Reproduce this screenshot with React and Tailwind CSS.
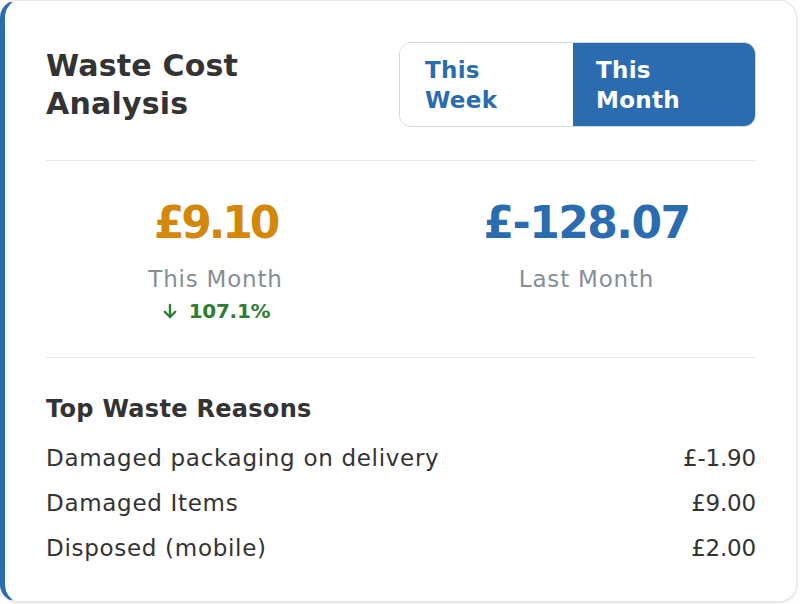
import React from "react";

const font = { fontFamily: '"DejaVu Sans", sans-serif' };

export default function App() {
  const rows = [
    ["Damaged packaging on delivery", "£-1.90"],
    ["Damaged Items", "£9.00"],
    ["Disposed (mobile)", "£2.00"],
  ];
  return (
    <div className="w-[800px] h-[604px] bg-white" style={font}>
      <div className="w-[797px] h-[602px] rounded-[18px] border border-gray-200 border-l-[5px] border-l-[#2b6cb0] bg-white shadow-[0_1px_3px_rgba(0,0,0,0.12)] pl-[41px] pr-[40px] pt-[41px]">
        <div className="flex items-center justify-between">
          <h2 className="text-[30px] leading-[38px] font-bold text-[#333333] tracking-[0.2px]">
            Waste Cost
            <br />
            Analysis
          </h2>
          <div className="flex w-[357px] h-[85px] rounded-[12px] border-[1.5px] border-gray-300 overflow-hidden">
            <button className="w-[173px] bg-white text-left pl-[25px] text-[23px] leading-[30px] font-bold text-[#2b6cb0] tracking-[0.3px]">
              This
              <br />
              Week
            </button>
            <button className="flex-1 bg-[#2b6cb0] text-left pl-[23px] text-[23px] leading-[30px] font-bold text-white tracking-[0.3px]">
              This
              <br />
              Month
            </button>
          </div>
        </div>
        <div className="mt-[33px] h-px bg-gray-200" />
        <div className="grid grid-cols-2 gap-8 pt-[39px] pb-[33px]">
          <div className="flex flex-col items-center">
            <div className="text-[44px] leading-[46px] font-bold text-[#d4880a] tracking-[-3.2px]">£9.10</div>
            <div className="mt-[18px] text-[23px] leading-[30px] text-[#868e96] tracking-[0.8px]">This Month</div>
            <div className="mt-[4px] flex items-center gap-[10px] text-[20px] leading-[26px] font-bold text-[#2e7d32] tracking-[-0.3px]">
              <svg width="18" height="18" viewBox="0 0 24 24" fill="none" stroke="currentColor" strokeWidth="3.2" strokeLinecap="round" strokeLinejoin="round">
                <path d="M12 4v16" />
                <path d="M5 13l7 7 7-7" />
              </svg>
              <span>107.1%</span>
            </div>
          </div>
          <div className="flex flex-col items-center">
            <div className="text-[44px] leading-[46px] font-bold text-[#2b6cb0] tracking-[-1.6px]">£-128.07</div>
            <div className="mt-[18px] text-[23px] leading-[30px] text-[#868e96] tracking-[0.8px]">Last Month</div>
          </div>
        </div>
        <div className="h-px bg-gray-200" />
        <div className="pt-[36px]">
          <div className="text-[24px] leading-[30px] font-bold text-[#333333] tracking-[0.3px]">Top Waste Reasons</div>
          <div className="mt-[19px] flex flex-col gap-[15px]">
            {rows.map(([label, value]) => (
              <div key={label} className="flex justify-between text-[23px] leading-[30px] text-[#333333]">
                <span className="tracking-[0.7px]">{label}</span>
                <span className="tracking-[-0.2px]">{value}</span>
              </div>
            ))}
          </div>
        </div>
      </div>
    </div>
  );
}
